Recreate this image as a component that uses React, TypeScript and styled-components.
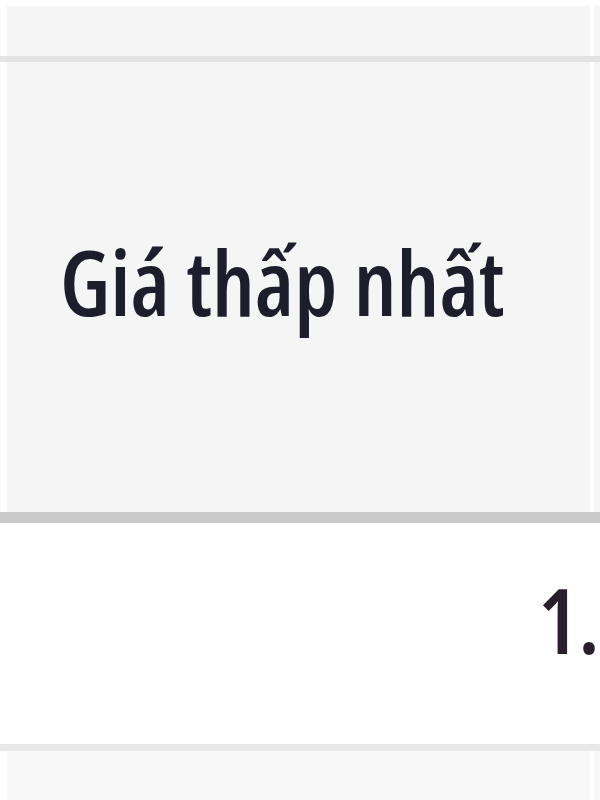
import styled, { createGlobalStyle } from 'styled-components';

const GlobalStyle = createGlobalStyle`
  html, body {
    margin: 0;
    padding: 0;
    background: #fff;
  }
  body {
    font-family: 'Open Sans', 'Noto Sans', sans-serif;
  }
`;

const Table = styled.div`
  width: 600px;
  height: 800px;
  overflow: hidden;
  padding-top: 6px;
  box-sizing: border-box;
  display: flex;
  flex-direction: column;
`;

const Row = styled.div`
  display: flex;
  flex-shrink: 0;
`;

const TopRow = styled(Row)`
  height: 50px;
  border-bottom: 6px solid #e3e3e3;
`;

const HeadRow = styled(Row)`
  height: 450px;
  border-bottom: 11px solid #c9c9c9;
`;

const DataRow = styled(Row)`
  height: 221px;
  border-bottom: 7px solid #e8e8e8;
`;

const NextRow = styled(Row)`
  height: 60px;
`;

const Cell = styled.div<{ $narrow?: boolean; $light?: boolean }>`
  flex-shrink: 0;
  width: ${(p) => (p.$narrow ? '20px' : '583px')};
  border-left: ${(p) => (p.$narrow ? '4px' : '7px')} solid #fff;
  background: ${(p) => (p.$light ? '#f8f8f8' : '#f5f5f5')};
  display: flex;
  align-items: center;
  white-space: nowrap;
`;

const DataCell = styled.div`
  flex: 1;
  display: flex;
  align-items: center;
  justify-content: flex-start;
  padding-left: 538px;
  white-space: nowrap;
  background: #fff;
`;

const HeadText = styled.span`
  display: inline-block;
  margin-left: 53px;
  margin-top: -12px;
  font-size: 90px;
  font-weight: 600;
  font-stretch: 80%;
  color: #1c1e2c;
  filter: blur(0.6px);
`;

const NumText = styled.span`
  display: inline-block;
  margin-top: -30px;
  font-size: 90px;
  font-weight: 600;
  font-stretch: 80%;
  color: #2a1d2e;
  filter: blur(0.6px);
`;

export default function App() {
  return (
    <>
      <GlobalStyle />
      <Table>
        <TopRow>
          <Cell />
          <Cell $narrow />
        </TopRow>
        <HeadRow>
          <Cell>
            <HeadText>Giá thấp nhất</HeadText>
          </Cell>
          <Cell $narrow />
        </HeadRow>
        <DataRow>
          <DataCell>
            <NumText>1.250.000</NumText>
          </DataCell>
        </DataRow>
        <NextRow>
          <Cell $light />
          <Cell $narrow $light />
        </NextRow>
      </Table>
    </>
  );
}
